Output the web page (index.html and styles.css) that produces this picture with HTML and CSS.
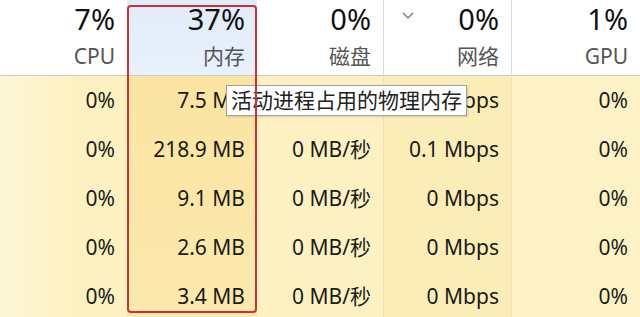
FILE: index.html
```html
<!DOCTYPE html>
<html lang="zh-CN">
<head>
    <meta charset="UTF-8">
    <title>任务管理器</title>
    <link rel="stylesheet" href="styles.css">
</head>
<body>
    <div class="table">
        <div class="head">
            <div class="hcell cpu"><div class="pct">7%</div><div class="name">CPU</div></div>
            <div class="hcell mem"><div class="pct">37%</div><div class="name">内存</div></div>
            <div class="hcell disk"><div class="pct">0%</div><div class="name">磁盘</div></div>
            <div class="hcell net">
                <svg class="chev" width="12" height="7" viewBox="0 0 12 7"><polyline points="1,1 6,6 11,1" fill="none" stroke="#6b6b6b" stroke-width="1.2"/></svg>
                <div class="pct">0%</div><div class="name">网络</div>
            </div>
            <div class="hcell gpu"><div class="pct">1%</div><div class="name">GPU</div></div>
        </div>

        <div class="body">
            <div class="col cpu"><div>0%</div><div>0%</div><div>0%</div><div>0%</div><div>0%</div></div>
            <div class="col mem"><div>7.5 MB</div><div>218.9 MB</div><div>9.1 MB</div><div>2.6 MB</div><div>3.4 MB</div></div>
            <div class="col disk"><div>0 MB/秒</div><div>0 MB/秒</div><div>0 MB/秒</div><div>0 MB/秒</div><div>0 MB/秒</div></div>
            <div class="col net"><div>0 Mbps</div><div>0.1 Mbps</div><div>0 Mbps</div><div>0 Mbps</div><div>0 Mbps</div></div>
            <div class="col gpu"><div>0%</div><div>0%</div><div>0%</div><div>0%</div><div>0%</div></div>
        </div>

        <div class="tooltip">活动进程占用的物理内存</div>
        <div class="mark"></div>
    </div>
</body>
</html>
```

FILE: styles.css
```css
body {
    margin: 0;
    background: #fdf2c4;
    font-family: "Noto Sans", "Noto Sans CJK SC", sans-serif;
    overflow: hidden;
}
.table {
    position: relative;
    width: 640px;
    height: 317px;
}
.head, .body {
    display: grid;
    grid-template-columns: 127px 130px 127px 128px 128px;
}
.head {
    height: 76px;
    background: #fff;
    border-bottom: 1px solid #c9c9c9;
    box-sizing: border-box;
}
.hcell {
    position: relative;
    text-align: right;
    padding-right: 12px;
}
.hcell.disk, .hcell.net {
    border-right: 1px solid #dcdcdc;
}
.hcell.mem {
    background: linear-gradient(#dfecf9, #e8f1fb);
}
.pct {
    font-size: 29px;
    line-height: 40px;
    margin-top: -1px;
    color: #111;
}
.name {
    font-size: 21px;
    line-height: 34px;
    color: #555;
}
.chev {
    position: absolute;
    left: 18px;
    top: 12px;
}
.col {
    text-align: right;
    padding-right: 12px;
    font-size: 21px;
    color: #1b1b1b;
}
.col div {
    height: 49px;
    line-height: 49px;
}
.col.cpu {
    background: linear-gradient(90deg, #fef6d8, #fdf1c2 60%);
}
.col.mem {
    background: linear-gradient(#fbe4a2, #fce9ae);
}
.col.disk {
    background: #fdf1c3;
    border-right: 1px solid #f2e4b2;
}
.col.net {
    background: #fbedb8;
    border-right: 1px solid #f2e4b2;
}
.col.gpu {
    background: #fdf2c5;
}
.tooltip {
    position: absolute;
    left: 226px;
    top: 85px;
    width: 241px;
    height: 31px;
    box-sizing: border-box;
    background: #fff;
    border: 1px solid #a0a0a0;
    box-shadow: 1px 1px 2px rgba(0, 0, 0, 0.15);
    font-size: 21px;
    line-height: 29px;
    padding-left: 4px;
    color: #222;
    white-space: nowrap;
}
.mark {
    position: absolute;
    left: 127px;
    top: 5px;
    width: 130px;
    height: 308px;
    box-sizing: border-box;
    border: 2px solid #c8313a;
    border-radius: 4px;
}
```
